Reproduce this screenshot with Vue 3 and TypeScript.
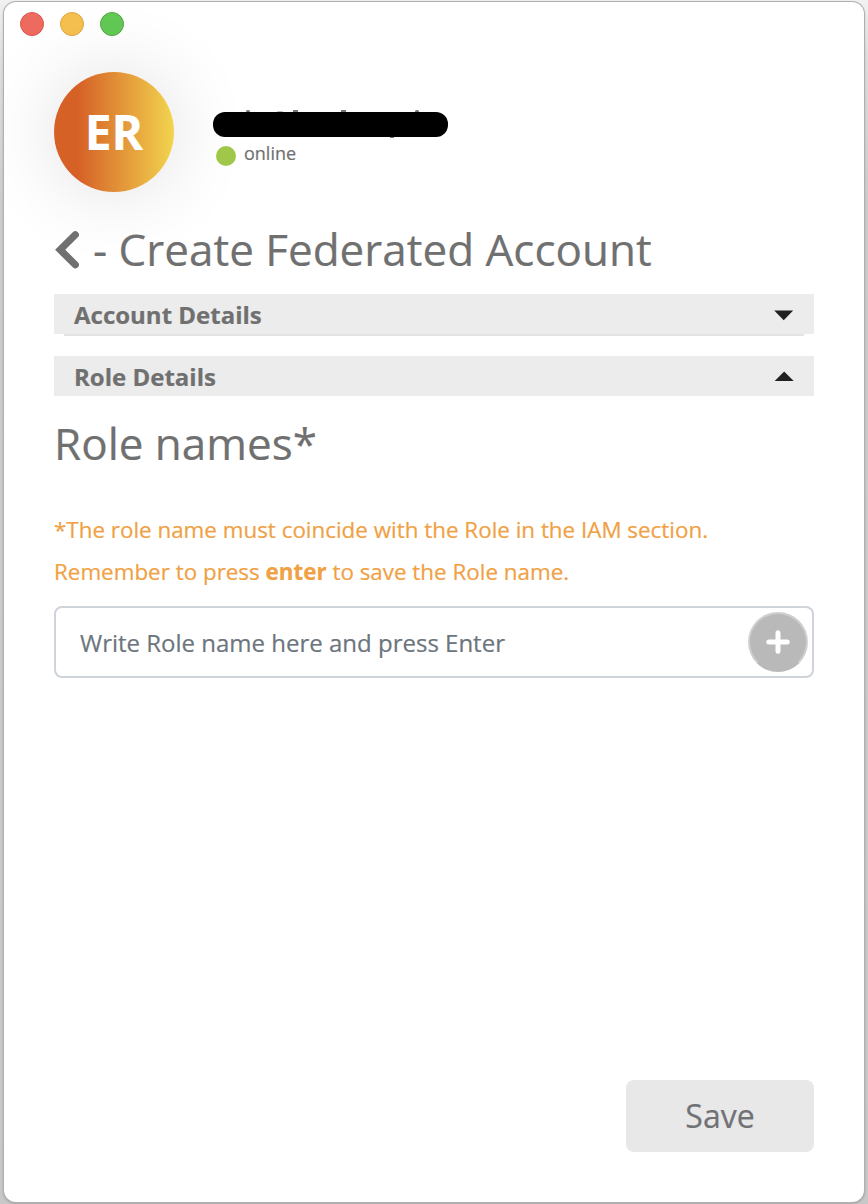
<script setup lang="ts">
import { ref } from 'vue'

interface Section {
  title: string
  open: boolean
}

const controls = ['close', 'minimize', 'zoom']
const sections = ref<Section[]>([
  { title: 'Account Details', open: false },
  { title: 'Role Details', open: true },
])
const roleName = ref('')
</script>

<template>
  <div class="desktop">
    <main class="window">
      <div class="controls">
        <span v-for="c in controls" :key="c" class="control" :class="c"></span>
      </div>

      <header class="profile">
        <div class="avatar"><span class="initials">ER</span></div>
        <div class="identity">
          <svg class="redacted" width="236" height="32" viewBox="0 0 236 32">
            <g fill="#777">
              <rect x="33" y="2" width="4" height="4" rx="1.5" />
              <rect x="64" y="3" width="6" height="3" rx="1" opacity=".5" />
              <rect x="80" y="2" width="5" height="4" />
              <rect x="128" y="2" width="5" height="4" />
              <rect x="202" y="2" width="4" height="4" rx="1.5" />
              <rect x="177" y="27" width="4" height="3" />
            </g>
            <rect x="0" y="4" width="235" height="25" rx="12" fill="#000" />
          </svg>
          <div class="status"><i class="dot"></i><span class="state">online</span></div>
        </div>
      </header>

      <h1 class="heading">
        <svg class="back" width="24" height="40" viewBox="0 0 24 40">
          <path d="M20.3 4.8 L5.2 19.8 L20.3 34.8" />
        </svg>
        <span class="title">- Create Federated Account</span>
      </h1>

      <section v-for="s in sections" :key="s.title" class="accordion" :class="{ open: s.open }">
        <div class="bar" @click="s.open = !s.open">
          <span class="label">{{ s.title }}</span>
          <svg class="caret" width="20" height="12" viewBox="0 0 20 12">
            <path v-if="s.open" d="M0.7 10 L10.2 0.4 L19.7 10 Z" />
            <path v-else d="M0.2 1.5 H19.2 L9.7 11.2 Z" />
          </svg>
        </div>
      </section>

      <h2 class="subtitle">Role names*</h2>
      <p class="hint">
        *The role name must coincide with the Role in the IAM section.<br />
        Remember to press <b>enter</b> to save the Role name.
      </p>

      <div class="field">
        <input v-model="roleName" class="input" type="text" placeholder="Write Role name here and press Enter" />
        <button class="add" aria-label="Add role">
          <svg width="24" height="24" viewBox="0 0 24 24">
            <path d="M12 2.8 V21.2 M2.8 12 H21.2" />
          </svg>
        </button>
      </div>

      <footer class="actions">
        <button class="save">Save</button>
      </footer>
    </main>
  </div>
</template>

<style>
body {
  margin: 0;
}
</style>

<style scoped>
.desktop {
  box-sizing: border-box;
  width: 868px;
  height: 1204px;
  padding: 2px 4px;
  overflow: hidden;
  background: linear-gradient(180deg, #f1f1f1 0, #dedede 60px, #cdcdcd 200px, #c8c8c8 100%);
  font-family: 'Open Sans', 'Noto Sans', sans-serif;
  color: #707070;
  -webkit-text-stroke: 0.2px currentColor;
}

.window {
  box-sizing: border-box;
  display: flex;
  flex-direction: column;
  width: 860px;
  height: 1200px;
  padding: 10px 50px 50px;
  border-radius: 12px;
  overflow: hidden;
  background: #fff;
  box-shadow: 0 0 0 1px #b0b0b0, 0 1px 3px rgba(0, 0, 0, 0.35);
}

.controls {
  display: flex;
  gap: 16px;
  height: 24px;
  margin-left: -34px;
}

.control {
  box-sizing: border-box;
  width: 24px;
  height: 24px;
  border-radius: 50%;
}

.close {
  background: #ed6a5e;
  border: 1px solid #d9584e;
}

.minimize {
  background: #f5c04f;
  border: 1px solid #d9a441;
}

.zoom {
  background: #62c955;
  border: 1px solid #51a83f;
}

.profile {
  display: flex;
  height: 120px;
  margin-top: 36px;
}

.avatar {
  display: flex;
  align-items: center;
  justify-content: center;
  flex: none;
  width: 120px;
  height: 120px;
  border-radius: 50%;
  background: linear-gradient(90deg, #d66127 0%, #d66127 20%, #f2d44f 100%);
  box-shadow: 0 0 80px rgba(0, 0, 0, 0.13);
}

.initials {
  color: #fff;
  font-size: 48px;
  font-weight: 700;
  line-height: 60px;
}

.identity {
  margin-left: 39px;
  padding-top: 36px;
}

.redacted {
  display: block;
}

.status {
  display: flex;
  align-items: center;
  height: 27px;
  padding-left: 3px;
}

.dot {
  width: 20px;
  height: 20px;
  margin: 5px 8px 0 0;
  border-radius: 50%;
  background: #9fc84a;
}

.state {
  margin-top: -2px;
  font-size: 18px;
  line-height: 26px;
}

.heading {
  display: flex;
  align-items: center;
  height: 54px;
  margin: 30px 0 18px;
  font-size: 44px;
  font-weight: 400;
  line-height: 54px;
  white-space: nowrap;
}

.back {
  flex: none;
  margin: 2px 14px 0 1px;
  fill: none;
  stroke: #707070;
  stroke-width: 7.2;
  stroke-linejoin: miter;
  stroke-linecap: round;
}

.accordion {
  height: 42px;
  margin-bottom: 20px;
}

.accordion:not(.open)::after {
  content: '';
  display: block;
  height: 2px;
  margin: 0 10px;
  background: #e3e3e3;
}

.accordion.open {
  height: 40px;
}

.bar {
  display: flex;
  align-items: center;
  justify-content: space-between;
  height: 40px;
  padding: 0 20px;
  background: #ececec;
}

.label {
  padding-top: 2px;
  font-size: 24px;
  font-weight: 700;
  line-height: 38px;
}

.caret {
  margin-top: 1px;
  fill: #212121;
}

.subtitle {
  margin: 0 0 39px;
  font-size: 44px;
  font-weight: 400;
  line-height: 54px;
}

.hint {
  margin: 0 0 13px;
  color: #f0a144;
  font-size: 22.4px;
  line-height: 42px;
  white-space: nowrap;
}

.field {
  box-sizing: border-box;
  display: flex;
  align-items: center;
  height: 72px;
  padding: 0 4px 0 24px;
  border: 2px solid #ced4da;
  border-radius: 8px;
}

.input {
  box-sizing: border-box;
  flex: 1;
  min-width: 0;
  height: 60px;
  padding: 1px 0 0;
  border: 0;
  outline: 0;
  background: transparent;
  color: #6c757d;
  font: 24px/59px 'Open Sans', 'Noto Sans', sans-serif;
}

.input::placeholder {
  color: #6c757d;
  opacity: 1;
}

.add {
  box-sizing: border-box;
  display: flex;
  align-items: center;
  justify-content: center;
  width: 60px;
  height: 60px;
  padding: 0;
  border: 2px solid #cfcfcf;
  border-bottom-color: #b9b9b9;
  border-radius: 50%;
  background: #b9b9b9;
}

.add path {
  fill: none;
  stroke: #fff;
  stroke-width: 5;
  stroke-linecap: round;
}

.actions {
  display: flex;
  justify-content: flex-end;
  margin-top: auto;
}

.save {
  width: 188px;
  height: 72px;
  padding: 0;
  border: 0;
  border-radius: 8px;
  background: #e8e8e8;
  color: #707276;
  font: 32px/72px 'Open Sans', 'Noto Sans', sans-serif;
}
</style>
